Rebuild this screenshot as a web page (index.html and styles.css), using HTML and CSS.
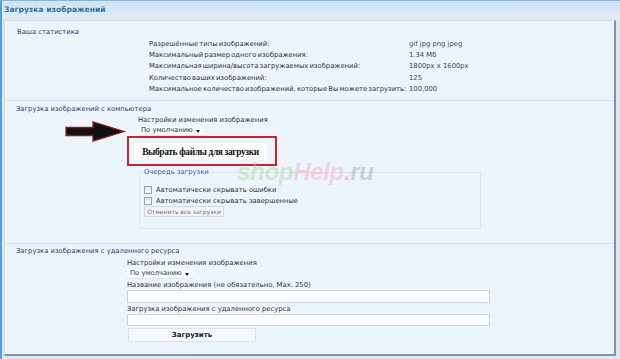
FILE: index.html
```html
<!DOCTYPE html>
<html lang="ru">
<head>
<meta charset="utf-8">
<title>Загрузка изображений</title>
<link rel="stylesheet" href="styles.css">
</head>
<body>
<div class="window">
  <div class="titlebar">Загрузка изображений</div>
  <div class="panel">
    <section class="sec sec-stats">
      <div class="sec-title">Ваша статистика</div>
      <dl class="stats">
        <dt>Разрешённые типы изображений:</dt><dd>gif jpg png jpeg</dd>
        <dt>Максимальный размер одного изображения:</dt><dd>1.34 Мб</dd>
        <dt>Максимальная ширина/высота загружаемых изображений:</dt><dd>1800px x 1600px</dd>
        <dt>Количество ваших изображений:</dt><dd>125</dd>
        <dt>Максимальное количество изображений, которые Вы можете загрузить:</dt><dd>100,000</dd>
      </dl>
    </section>

    <section class="sec sec-local">
      <div class="sec-title">Загрузка изображений с компьютера</div>
      <div class="form-body">
        <div class="field-label indent">Настройки изменения изображения</div>
        <div class="select indent">По умолчанию <span class="caret"></span></div>
        <div class="highlight"><button class="pick" type="button">Выбрать файлы для загрузки</button></div>
        <fieldset class="queue">
          <legend>Очередь загрузки</legend>
          <label class="chk"><span class="box"></span>Автоматически скрывать ошибки</label>
          <label class="chk"><span class="box"></span>Автоматически скрывать завершенные</label>
          <button class="cancel" type="button">Отменить все загрузки</button>
        </fieldset>
      </div>
      <svg class="arrow" width="62" height="22" viewBox="0 0 62 22">
        <path d="M1 6.5 H28 V1 L59 10.5 L28 20 V14.5 H1 Z" fill="#111" stroke="#8e1b22" stroke-width="1.3" stroke-linejoin="miter"/>
      </svg>
      <div class="watermark"><span class="wm-shop">shop</span><span class="wm-help">Help</span><span class="wm-ru">.ru</span></div>
    </section>

    <section class="sec sec-remote">
      <div class="sec-title">Загрузка изображения с удаленного ресурса</div>
      <div class="form-body">
        <div class="field-label">Настройки изменения изображения</div>
        <div class="select">По умолчанию <span class="caret"></span></div>
        <div class="field-label small">Название изображения (не обязательно, Max. 250)</div>
        <div class="text-input tall"></div>
        <div class="field-label small">Загрузка изображения с удаленного ресурса</div>
        <div class="text-input"></div>
        <button class="submit" type="button">Загрузить</button>
      </div>
    </section>
  </div>
</div>
</body>
</html>
```

FILE: styles.css
```css
html, body {
  margin: 0;
  padding: 0;
}
body {
  width: 620px;
  height: 359px;
  overflow: hidden;
  background: #dbe9f6;
  font-family: "DejaVu Sans", Verdana, sans-serif;
  font-size: 6.8px;
  color: #333;
}
.window {
  height: 358px;
  border-top: 1px solid #8db5d9;
  border-left: 2px solid #5e9ccf;
  background: #dde9f4;
}
.titlebar {
  height: 18px;
  line-height: 18px;
  padding-left: 2px;
  font-weight: bold;
  font-size: 7.6px;
  color: #3d6f9c;
  background: linear-gradient(#cfe3f4, #dfedf9);
}
.panel {
  position: relative;
  margin: 1px 4px 0 2px;
  height: 333px;
  background: #edf5fc;
  border-top: 1px solid #d2e0ec;
  border-left: 1px solid #cbd9e6;
  border-right: 2px solid #87939f;
  border-bottom: 2px solid #87939f;
}
.sec {
  position: relative;
  border-bottom: 1px solid #d4e2ee;
}
.sec-title {
  padding-left: 11px;
  line-height: 11px;
  color: #2f3c6e;
}
.sec-stats {
  padding-top: 6px;
  height: 73px;
}
.sec-stats .sec-title {
  padding-left: 12px;
}
.stats {
  margin: 1px 0 0 144px;
  display: grid;
  grid-template-columns: 260px auto;
  line-height: 11.2px;
  white-space: nowrap;
}
.stats dt, .stats dd {
  margin: 0;
}
.stats dt {
  word-spacing: -1px;
}
.stats dd {
  color: #444;
}
.sec-local {
  padding-top: 3px;
  height: 139px;
}
.form-body {
  padding-left: 122px;
}
.indent {
  margin-left: 11px;
}
.field-label {
  line-height: 11px;
  color: #333;
  white-space: nowrap;
}
.select {
  position: relative;
  box-sizing: border-box;
  width: 66px;
  height: 10px;
  line-height: 9px;
  padding-left: 3px;
  background: #f8fbfe;
  border-bottom: 1px solid #dfe7ee;
  color: #333;
}
.caret {
  position: absolute;
  right: 4px;
  top: 3.5px;
  width: 0;
  height: 0;
  border-left: 2.5px solid transparent;
  border-right: 2.5px solid transparent;
  border-top: 3px solid #222;
}
.highlight {
  box-sizing: border-box;
  width: 150px;
  height: 30px;
  border: 2px solid #c3262f;
  padding: 5px 0 0 5px;
}
.pick {
  display: block;
  box-sizing: border-box;
  width: 133px;
  height: 17px;
  margin: 0;
  padding: 0;
  border: none;
  background: #fafcfe;
  font-family: "Liberation Serif", "Times New Roman", serif;
  font-weight: bold;
  font-size: 9.4px;
  letter-spacing: -0.35px;
  white-space: nowrap;
  color: #111;
}
.queue {
  box-sizing: border-box;
  width: 342px;
  height: 62px;
  margin: 1px 0 0 12px;
  padding: 7px 4px 0 4px;
  border: 1px solid #dbe6ef;
}
.queue legend {
  padding: 0;
  line-height: 10px;
  color: #3b5aa8;
}
.chk {
  display: flex;
  align-items: center;
  height: 11px;
  color: #333;
}
.box {
  box-sizing: border-box;
  width: 8px;
  height: 8px;
  margin-right: 4px;
  border: 1px solid #9aa3ab;
  background: linear-gradient(#e4e8ec, #ffffff);
}
.cancel {
  display: block;
  box-sizing: border-box;
  width: 80px;
  height: 11px;
  margin: 0;
  padding: 0;
  border: 1px solid #d3d9df;
  background: #f1f4f7;
  font-family: "DejaVu Sans", Verdana, sans-serif;
  font-size: 6px;
  color: #777;
}
.arrow {
  position: absolute;
  left: 60px;
  top: 20px;
}
.watermark {
  position: absolute;
  left: 232px;
  top: 59px;
  font-family: "Liberation Sans", Arial, sans-serif;
  font-weight: bold;
  font-style: italic;
  font-size: 24px;
  line-height: 24px;
  letter-spacing: -0.3px;
  opacity: 0.4;
}
.wm-shop { color: #a9d08c; }
.wm-help { color: #eea3af; }
.wm-ru { color: #8d9cab; }
.sec-remote {
  padding-top: 2px;
  border-bottom: none;
}
.sec-remote .field-label {
  margin-top: 1px;
}
.sec-remote .field-label.small {
  margin-top: 2px;
  line-height: 9px;
}
.text-input {
  box-sizing: border-box;
  width: 363px;
  height: 12px;
  background: #fdfeff;
  border: 1px solid #cfd8e0;
}
.text-input.tall {
  height: 13px;
}
.submit {
  display: block;
  box-sizing: border-box;
  width: 128px;
  height: 14px;
  margin: 2px 0 0 1px;
  padding: 0;
  border: 1px solid #dde3e8;
  background: #f6f9fc;
  font-family: "DejaVu Sans", Verdana, sans-serif;
  font-weight: bold;
  font-size: 7px;
  color: #222;
}
```
